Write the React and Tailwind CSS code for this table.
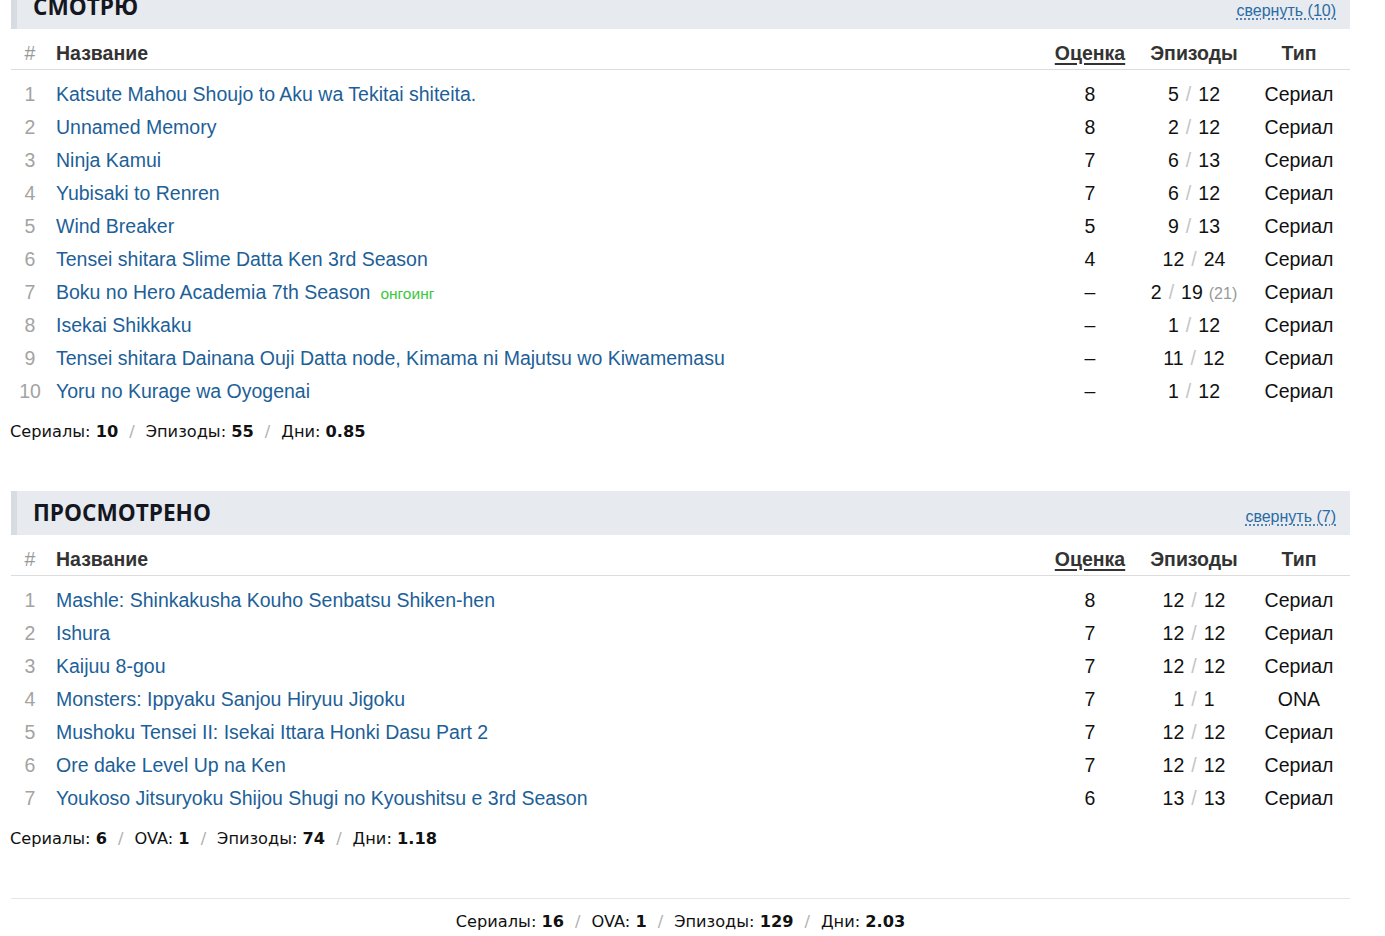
import React from "react";

const watching = [
  { title: "Katsute Mahou Shoujo to Aku wa Tekitai shiteita.", score: "8", ep: "5", total: "12", type: "Сериал" },
  { title: "Unnamed Memory", score: "8", ep: "2", total: "12", type: "Сериал" },
  { title: "Ninja Kamui", score: "7", ep: "6", total: "13", type: "Сериал" },
  { title: "Yubisaki to Renren", score: "7", ep: "6", total: "12", type: "Сериал" },
  { title: "Wind Breaker", score: "5", ep: "9", total: "13", type: "Сериал" },
  { title: "Tensei shitara Slime Datta Ken 3rd Season", score: "4", ep: "12", total: "24", type: "Сериал" },
  { title: "Boku no Hero Academia 7th Season", score: "–", ep: "2", total: "19", aired: "21", ongoing: true, type: "Сериал" },
  { title: "Isekai Shikkaku", score: "–", ep: "1", total: "12", type: "Сериал" },
  { title: "Tensei shitara Dainana Ouji Datta node, Kimama ni Majutsu wo Kiwamemasu", score: "–", ep: "11", total: "12", type: "Сериал" },
  { title: "Yoru no Kurage wa Oyogenai", score: "–", ep: "1", total: "12", type: "Сериал" },
];

const completed = [
  { title: "Mashle: Shinkakusha Kouho Senbatsu Shiken-hen", score: "8", ep: "12", total: "12", type: "Сериал" },
  { title: "Ishura", score: "7", ep: "12", total: "12", type: "Сериал" },
  { title: "Kaijuu 8-gou", score: "7", ep: "12", total: "12", type: "Сериал" },
  { title: "Monsters: Ippyaku Sanjou Hiryuu Jigoku", score: "7", ep: "1", total: "1", type: "ONA" },
  { title: "Mushoku Tensei II: Isekai Ittara Honki Dasu Part 2", score: "7", ep: "12", total: "12", type: "Сериал" },
  { title: "Ore dake Level Up na Ken", score: "7", ep: "12", total: "12", type: "Сериал" },
  { title: "Youkoso Jitsuryoku Shijou Shugi no Kyoushitsu e 3rd Season", score: "6", ep: "13", total: "13", type: "Сериал" },
];

const Stats = ({ items, className = "" }) => (
  <div className={`h-[24px] flex items-center text-[16.2px] text-[#111] font-['DejaVu_Sans',sans-serif] ${className}`}>
    {items.map((it, i) => (
      <React.Fragment key={it.label}>
        {i > 0 && <span className="text-[#b0b0b0] mx-[11px]">/</span>}
        <span>
          {it.label}: <b className="font-bold">{it.value}</b>
        </span>
      </React.Fragment>
    ))}
  </div>
);

const Section = ({ title, count, rows, stats, className = "" }) => (
  <div className={className}>
    <div className="h-[44px] bg-[#e7eaee] border-l-[6px] border-[#d7dce2] flex items-center justify-between pl-[16px] pr-[14px]">
      <h2 className="text-[22.6px] font-bold text-[#14171f] font-['Open_Sans',sans-serif]">{title}</h2>
      <a className="mt-[8px] text-[16px] text-[#2a6aa5] underline decoration-dotted underline-offset-[3px] font-['Liberation_Sans',Arial,sans-serif] cursor-pointer">
        свернуть ({count})
      </a>
    </div>
    <div className="font-['Liberation_Sans',Arial,sans-serif] text-[19.5px]">
      <div className="h-[41px] pt-[10px] flex items-center border-b border-[#dcdcdc] font-bold text-[#333]">
        <div className="w-[38px] text-center text-[#999] font-normal">#</div>
        <div className="flex-1 pl-[7px]">Название</div>
        <div className="w-[100px] text-center underline underline-offset-[3px] decoration-2">Оценка</div>
        <div className="w-[108px] text-center">Эпизоды</div>
        <div className="w-[102px] text-center">Тип</div>
      </div>
      <div className="pt-[8px]">
        {rows.map((r, i) => (
          <div key={r.title} className="h-[33px] flex items-center text-[#111]">
            <div className="w-[38px] text-center text-[#a3a3a3]">{i + 1}</div>
            <div className="flex-1 pl-[7px] flex items-baseline">
              <a className="text-[#1d5f98] cursor-pointer">{r.title}</a>
              {r.ongoing && <span className="ml-[10px] text-[15.5px] text-[#38c83a]">онгоинг</span>}
            </div>
            <div className="w-[100px] text-center">{r.score}</div>
            <div className="w-[108px] text-center whitespace-nowrap">
              {r.ep}
              <span className="text-[#c4c4c4] mx-[7px]">/</span>
              {r.total}
              {r.aired && <span className="text-[16px] text-[#999] ml-[6px]">({r.aired})</span>}
            </div>
            <div className="w-[102px] text-center">{r.type}</div>
          </div>
        ))}
      </div>
      <Stats items={stats} className="mt-[12px] -ml-px" />
    </div>
  </div>
);

export default function App() {
  return (
    <div className="w-[1385px] h-[936px] overflow-hidden bg-white">
      <div className="ml-[11px] w-[1339px] -mt-[15px]">
        <Section
          title="СМОТРЮ"
          count={10}
          rows={watching}
          stats={[
            { label: "Сериалы", value: "10" },
            { label: "Эпизоды", value: "55" },
            { label: "Дни", value: "0.85" },
          ]}
        />
        <Section
          className="mt-[47px]"
          title="ПРОСМОТРЕНО"
          count={7}
          rows={completed}
          stats={[
            { label: "Сериалы", value: "6" },
            { label: "OVA", value: "1" },
            { label: "Эпизоды", value: "74" },
            { label: "Дни", value: "1.18" },
          ]}
        />
        <div className="mt-[47px] border-t border-[#e5e5e5] pt-[11px] flex justify-center">
          <Stats
            items={[
              { label: "Сериалы", value: "16" },
              { label: "OVA", value: "1" },
              { label: "Эпизоды", value: "129" },
              { label: "Дни", value: "2.03" },
            ]}
          />
        </div>
      </div>
    </div>
  );
}
